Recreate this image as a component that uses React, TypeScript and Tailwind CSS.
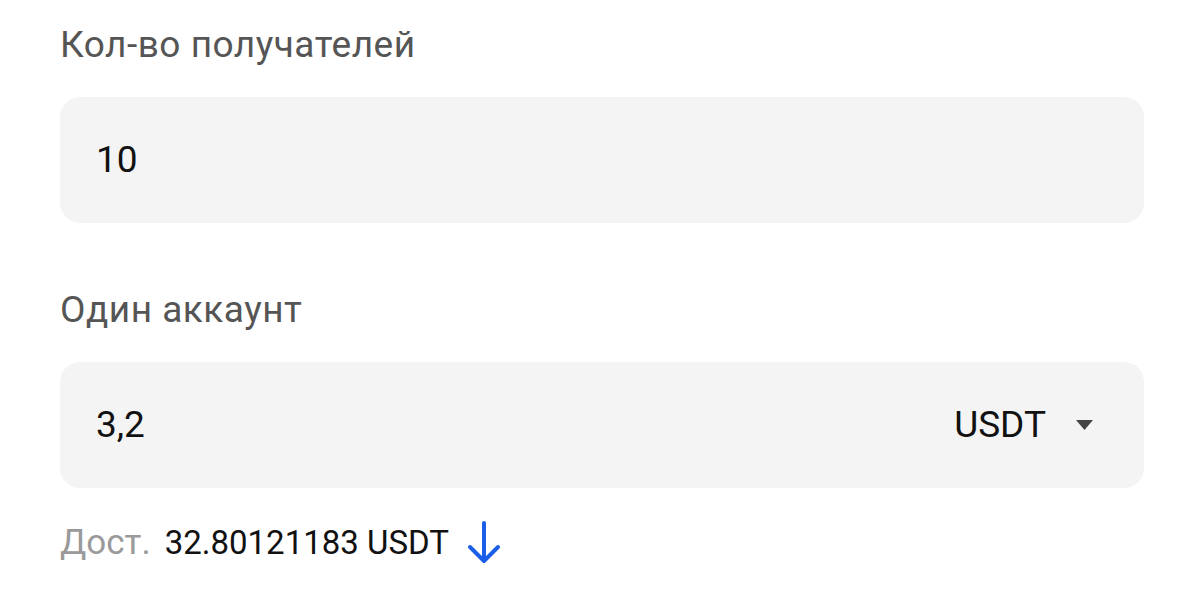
function Field({ label, value, suffix }: { label: string; value: string; suffix?: string }) {
  return (
    <div className="flex flex-col">
      <div className="text-[37px] leading-[44px] tracking-[0.5px] text-[#555555]">{label}</div>
      <div className="mt-[30px] h-[126px] rounded-[20px] bg-[#f4f4f4] px-9 flex items-center justify-between">
        <span className="text-[37px] text-[#111111]">{value}</span>
        {suffix && (
          <div className="flex items-center gap-[30px] pr-[15px]">
            <span className="text-[37px] text-[#111111]">{suffix}</span>
            <svg width="17" height="12" viewBox="0 0 17 12">
              <path d="M0 1 H17 L8.5 11 Z" fill="#444444" />
            </svg>
          </div>
        )}
      </div>
    </div>
  );
}

export default function App() {
  return (
    <div className="w-[1204px] h-[602px] bg-white font-['Roboto',sans-serif]">
      <div className="px-[60px] pt-[23px] flex flex-col">
        <Field label="Кол-во получателей" value="10" />
        <div className="mt-[65px]">
          <Field label="Один аккаунт" value="3,2" suffix="USDT" />
        </div>
        <div className="mt-[33px] flex items-center">
          <span className="text-[35px] leading-[40px] text-[#9a9a9a]">Дост.</span>
          <span className="ml-[14px] text-[33px] leading-[40px] text-[#111111]">32.80121183 USDT</span>
          <svg className="ml-[18px]" width="34" height="43" viewBox="0 0 34 43" fill="none">
            <path d="M17 2 V40 M3 26 L17 40 L31 26" stroke="#1b5ee8" strokeWidth="4" strokeLinecap="round" strokeLinejoin="round" />
          </svg>
        </div>
      </div>
    </div>
  );
}
